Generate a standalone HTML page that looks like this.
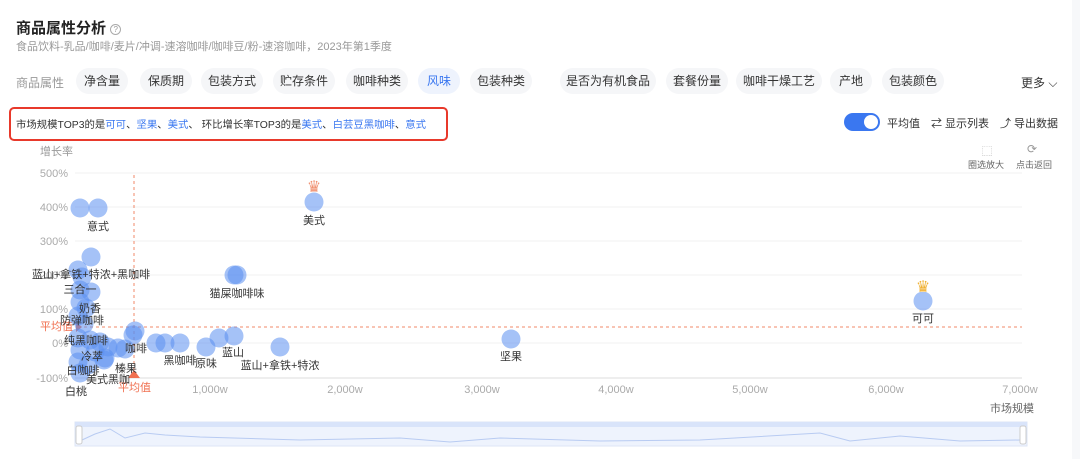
<!DOCTYPE html><html><head><meta charset="utf-8"><style>
body{margin:0;width:1080px;height:459px;background:#fff;font-family:"Liberation Sans","Noto Sans CJK SC",sans-serif;position:relative;overflow:hidden;color:#333}
.a{position:absolute;white-space:nowrap}
.tag{position:absolute;top:68px;height:26px;line-height:26px;border-radius:13px;background:#f5f6f8;font-size:12px;color:#333;text-align:center}
.b{color:#3a77f0}
</style></head><body>
<div class="a" style="left:16px;top:17px;font-size:15px;font-weight:bold;color:#222">商品属性分析 <span style="display:inline-block;width:9px;height:9px;border:1px solid #aaa;border-radius:50%;font-size:8px;line-height:9px;text-align:center;color:#999;font-weight:normal;vertical-align:middle">?</span></div>
<div class="a" style="left:16px;top:38px;font-size:11px;color:#999">食品饮料-乳品/咖啡/麦片/冲调-速溶咖啡/咖啡豆/粉-速溶咖啡，2023年第1季度</div>
<div class="a" style="left:16px;top:74px;font-size:12px;color:#999">商品属性</div>
<div class="tag" style="left:76px;width:52px">净含量</div>
<div class="tag" style="left:140px;width:52px">保质期</div>
<div class="tag" style="left:201px;width:62px">包装方式</div>
<div class="tag" style="left:273px;width:62px">贮存条件</div>
<div class="tag" style="left:346px;width:62px">咖啡种类</div>
<div class="tag" style="left:418px;width:42px;background:#eef3fd;color:#3a77f0">风味</div>
<div class="tag" style="left:470px;width:62px">包装种类</div>
<div class="tag" style="left:560px;width:96px">是否为有机食品</div>
<div class="tag" style="left:666px;width:62px">套餐份量</div>
<div class="tag" style="left:736px;width:86px">咖啡干燥工艺</div>
<div class="tag" style="left:830px;width:42px">产地</div>
<div class="tag" style="left:882px;width:62px">包装颜色</div>
<div class="a" style="left:1021px;top:74px;font-size:12px">更多 ⌵</div>
<div class="a" style="left:9px;top:107px;width:439px;height:34px;border:2px solid #e8392b;border-radius:5px;box-sizing:border-box"></div>
<div class="a" style="left:16px;top:116px;font-size:10.4px;color:#333">市场规模TOP3的是<span class="b">可可</span>、<span class="b">坚果</span>、<span class="b">美式</span>、 环比增长率TOP3的是<span class="b">美式</span>、<span class="b">白芸豆黑咖啡</span>、<span class="b">意式</span></div>
<div class="a" style="left:844px;top:113px;width:36px;height:18px;border-radius:9px;background:#3a77f0"><div style="position:absolute;right:2px;top:2px;width:14px;height:14px;border-radius:50%;background:#fff"></div></div>
<div class="a" style="left:887px;top:115px;font-size:11px">平均值</div>
<div class="a" style="left:931px;top:115px;font-size:11px">⇄ 显示列表</div>
<div class="a" style="left:1000px;top:115px;font-size:11px">⤴ 导出数据</div>
<div class="a" style="left:982px;top:143px;font-size:10px;color:#999">⬚</div>
<div class="a" style="left:1027px;top:142px;font-size:12px;color:#999">⟳</div>
<div class="a" style="left:968px;top:158px;font-size:9px;color:#666">圈选放大</div>
<div class="a" style="left:1016px;top:158px;font-size:9px;color:#666">点击返回</div>
<div class="a" style="left:1072px;top:0;width:8px;height:459px;background:#f7f8fa"></div>
<svg class="a" style="left:0;top:0" width="1080" height="459" font-family="Liberation Sans, Noto Sans CJK SC, sans-serif">
<g stroke="#f0f0f0"><line x1="75" x2="1022" y1="173" y2="173"/><line x1="75" x2="1022" y1="207" y2="207"/><line x1="75" x2="1022" y1="241" y2="241"/><line x1="75" x2="1022" y1="275" y2="275"/><line x1="75" x2="1022" y1="309" y2="309"/><line x1="75" x2="1022" y1="343" y2="343"/></g>
<line x1="75" x2="1022" y1="378" y2="378" stroke="#ddd"/>
<g font-size="11" fill="#aaa" text-anchor="end"><text x="68" y="177">500%</text><text x="68" y="211">400%</text><text x="68" y="245">300%</text><text x="68" y="279">200%</text><text x="68" y="313">100%</text><text x="68" y="347">0%</text><text x="68" y="382">-100%</text></g>
<text x="40" y="155" font-size="11" fill="#999">增长率</text>
<g font-size="11" fill="#aaa" text-anchor="middle"><text x="210" y="393">1,000w</text><text x="345" y="393">2,000w</text><text x="482" y="393">3,000w</text><text x="616" y="393">4,000w</text><text x="750" y="393">5,000w</text><text x="886" y="393">6,000w</text><text x="1020" y="393">7,000w</text></g>
<text x="1034" y="412" font-size="11" fill="#666" text-anchor="end">市场规模</text>
<g stroke="#f08a6a" stroke-dasharray="3,3"><line x1="134" x2="134" y1="175" y2="372"/><line x1="78" x2="1022" y1="327" y2="327"/></g>
<polygon points="128,378 140,378 134,370" fill="#f07050"/><polygon points="76,322 76,332 82,327" fill="#f07050"/>
<text x="40" y="330" font-size="11" fill="#f07050">平均值</text><text x="118" y="391" font-size="11" fill="#f07050">平均值</text>
<g fill="#5b8ff0" fill-opacity="0.55">
<circle cx="80" cy="208" r="9.5"/><circle cx="98" cy="208" r="9.5"/><circle cx="91" cy="257" r="9.5"/><circle cx="78" cy="270" r="9.5"/><circle cx="82" cy="277" r="9.5"/><circle cx="80" cy="290" r="9.5"/><circle cx="91" cy="292" r="9.5"/><circle cx="80" cy="302" r="9.5"/><circle cx="86" cy="308" r="9.5"/><circle cx="78" cy="316" r="9.5"/><circle cx="84" cy="324" r="9.5"/>
<circle cx="78" cy="338" r="9.5"/><circle cx="90" cy="340" r="9.5"/><circle cx="100" cy="342" r="9.5"/><circle cx="108" cy="347" r="9.5"/><circle cx="80" cy="350" r="9.5"/><circle cx="95" cy="352" r="9.5"/><circle cx="105" cy="358" r="9.5"/><circle cx="78" cy="362" r="9.5"/><circle cx="88" cy="365" r="9.5"/><circle cx="80" cy="373" r="9.5"/><circle cx="118" cy="348" r="9.5"/><circle cx="104" cy="360" r="9.5"/>
<circle cx="135" cy="331" r="9.5"/><circle cx="133" cy="335" r="9.5"/><circle cx="125" cy="349" r="9.5"/><circle cx="156" cy="343" r="9.5"/><circle cx="165" cy="343" r="9.5"/><circle cx="180" cy="343" r="9.5"/><circle cx="206" cy="347" r="9.5"/><circle cx="219" cy="338" r="9.5"/><circle cx="234" cy="336" r="9.5"/><circle cx="280" cy="347" r="9.5"/>
<circle cx="234" cy="275" r="9.5"/><circle cx="237" cy="275" r="9.5"/><circle cx="314" cy="202" r="9.5"/><circle cx="511" cy="339" r="9.5"/><circle cx="923" cy="301" r="9.5"/></g>
<text x="314" y="192" font-size="16" fill="#f09070" text-anchor="middle">♛</text><text x="923" y="292" font-size="16" fill="#f0b030" text-anchor="middle">♛</text>
<g font-size="11" fill="#333" text-anchor="middle">
<text x="98" y="230">意式</text><text x="314" y="224">美式</text><text x="91" y="278">蓝山+拿铁+特浓+黑咖啡</text><text x="80" y="293">三合一</text><text x="90" y="312">奶香</text><text x="82" y="324">防弹咖啡</text><text x="86" y="344">纯黑咖啡</text><text x="92" y="360">冷萃</text><text x="83" y="374">白咖啡</text><text x="108" y="383">美式黑咖</text><text x="76" y="395">白桃</text><text x="126" y="372">榛果</text><text x="136" y="352">咖啡</text><text x="180" y="364">黑咖啡</text><text x="206" y="367">原味</text><text x="233" y="356">蓝山</text><text x="280" y="369">蓝山+拿铁+特浓</text><text x="237" y="297">猫屎咖啡味</text><text x="511" y="360">坚果</text><text x="923" y="322">可可</text></g>
<rect x="75" y="422" width="952" height="24" fill="#eef3fd" stroke="#dde6f6"/>
<rect x="75" y="422" width="952" height="5" fill="#d9e4fa"/>
<path d="M82 440 L95 434 L110 429 L125 438 L145 433 L165 435 L200 437 L300 440 L400 438 L450 442 L500 438 L600 441 L700 440 L820 433 L850 441 L900 436 L960 441 L1020 440" fill="none" stroke="#b8cbf2"/>
<rect x="76" y="426" width="6" height="18" fill="#fff" stroke="#ccc" rx="2"/><rect x="1020" y="426" width="6" height="18" fill="#fff" stroke="#ccc" rx="2"/>
</svg>
</body></html>
